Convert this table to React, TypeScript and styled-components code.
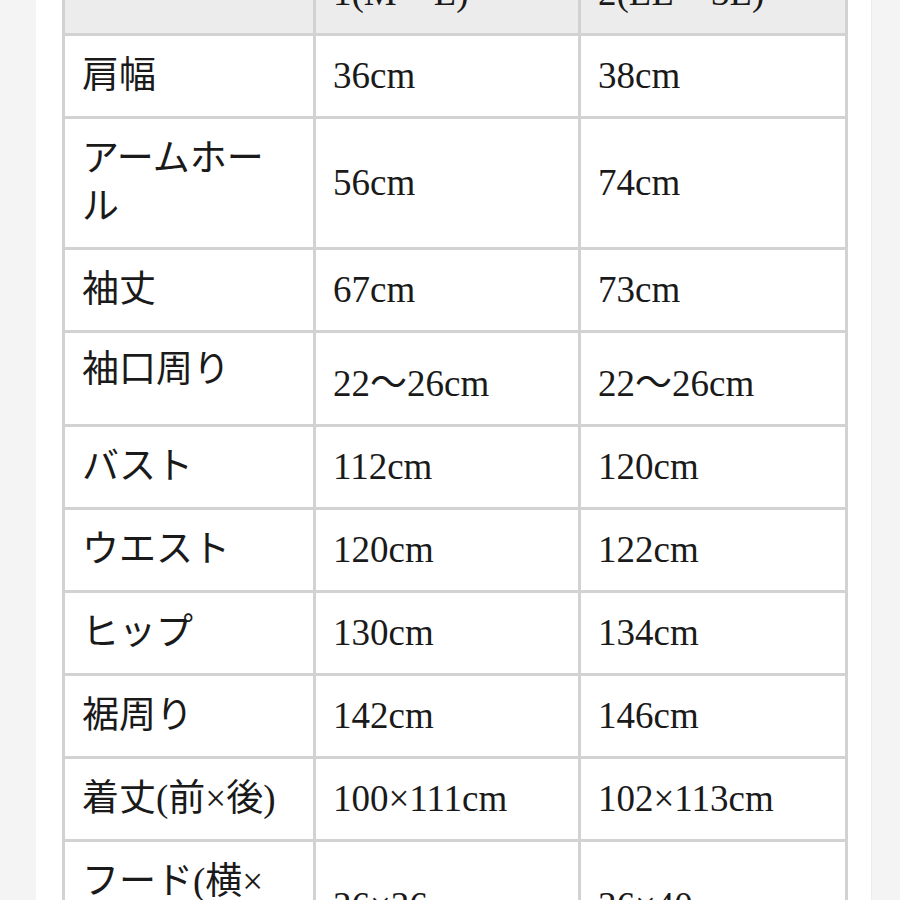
import React from "react";
import styled, { createGlobalStyle, css } from "styled-components";

const GlobalStyle = createGlobalStyle`
  html, body {
    margin: 0;
    padding: 0;
    background: #f4f4f4;
    overflow: hidden;
  }
  #root {
    min-height: 100vh;
  }
`;

const Page = styled.div`
  display: flex;
  min-height: 100vh;
  padding-left: 36px;
`;

const Panel = styled.main`
  width: 836px;
  min-height: 100vh;
  box-sizing: border-box;
  background: #ffffff;
  padding: 0 24px 0 26px;
  border-right: 1px solid #ececec;
`;

const SizeTable = styled.table`
  width: 786px;
  margin-top: -61px;
  table-layout: fixed;
  border-collapse: separate;
  border-spacing: 0;
  border-top: 3px solid #d2d2d2;
  border-left: 3px solid #d2d2d2;
  font-family: "Liberation Serif", "Noto Sans CJK JP", serif;
  font-size: 37px;
  line-height: 48px;
  color: #1a1a1a;
`;

const Col = styled.col<{ $w: number }>`
  width: ${(p) => p.$w}px;
`;

const cellBase = css<{ $wave?: boolean; $label?: boolean }>`
  padding: 16px 17px;
  text-align: left;
  vertical-align: middle;
  border-right: 3px solid #d2d2d2;
  border-bottom: 3px solid #d2d2d2;
  ${(p) =>
    p.$wave &&
    css`
      vertical-align: top;
      padding-top: ${p.$label ? 13 : 27}px;
    `}
`;

const HeadCell = styled.th<{ $wave?: boolean; $label?: boolean }>`
  ${cellBase};
  font-weight: normal;
  background: #ececec;
`;

const Cell = styled.td<{ $wave?: boolean; $label?: boolean }>`
  ${cellBase};
  background: #ffffff;
`;

const columns = [251, 265, 267];

const header = ["", "1(M〜L)", "2(LL〜3L)"];

const rows: string[][] = [
  ["肩幅", "36cm", "38cm"],
  ["アームホール", "56cm", "74cm"],
  ["袖丈", "67cm", "73cm"],
  ["袖口周り", "22〜26cm", "22〜26cm"],
  ["バスト", "112cm", "120cm"],
  ["ウエスト", "120cm", "122cm"],
  ["ヒップ", "130cm", "134cm"],
  ["裾周り", "142cm", "146cm"],
  ["着丈(前×後)", "100×111cm", "102×113cm"],
  ["フード(横×縦)", "36×36cm", "36×40cm"],
];

const hasWave = (row: string[]) => row.some((c) => c.includes("〜"));

export default function App() {
  const headWave = hasWave(header);
  return (
    <>
      <GlobalStyle />
      <Page>
        <Panel>
          <SizeTable>
            <colgroup>
              {columns.map((w, i) => (
                <Col key={i} $w={w} />
              ))}
            </colgroup>
            <thead>
              <tr>
                {header.map((h, i) => (
                  <HeadCell key={i} $wave={headWave} $label={i === 0}>
                    {h}
                  </HeadCell>
                ))}
              </tr>
            </thead>
            <tbody>
              {rows.map((row) => {
                const wave = hasWave(row);
                return (
                  <tr key={row[0]}>
                    {row.map((c, i) => (
                      <Cell key={i} $wave={wave} $label={i === 0}>
                        {c}
                      </Cell>
                    ))}
                  </tr>
                );
              })}
            </tbody>
          </SizeTable>
        </Panel>
      </Page>
    </>
  );
}
